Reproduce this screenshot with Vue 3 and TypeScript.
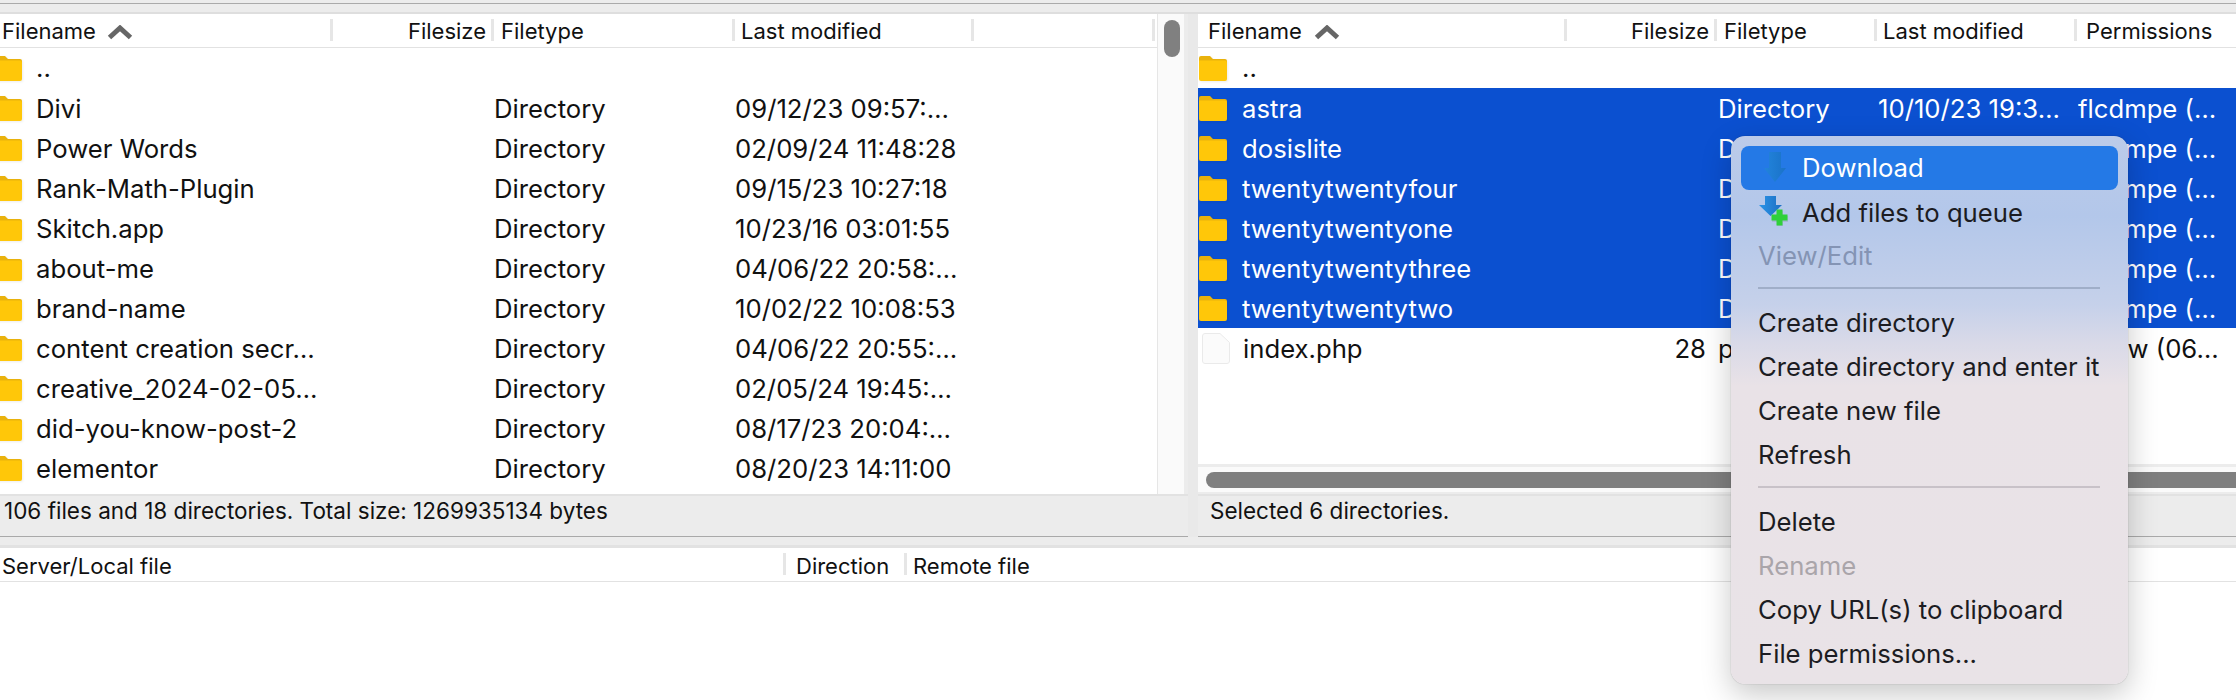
<script setup lang="ts">
interface Row { name: string; size?: string; type?: string; date?: string; perm?: string; file?: boolean; sel?: boolean }

const leftRows: Row[] = [
  { name: '..' },
  { name: 'Divi', type: 'Directory', date: '09/12/23 09:57:…' },
  { name: 'Power Words', type: 'Directory', date: '02/09/24 11:48:28' },
  { name: 'Rank-Math-Plugin', type: 'Directory', date: '09/15/23 10:27:18' },
  { name: 'Skitch.app', type: 'Directory', date: '10/23/16 03:01:55' },
  { name: 'about-me', type: 'Directory', date: '04/06/22 20:58:…' },
  { name: 'brand-name', type: 'Directory', date: '10/02/22 10:08:53' },
  { name: 'content creation secr…', type: 'Directory', date: '04/06/22 20:55:…' },
  { name: 'creative_2024-02-05…', type: 'Directory', date: '02/05/24 19:45:…' },
  { name: 'did-you-know-post-2', type: 'Directory', date: '08/17/23 20:04:…' },
  { name: 'elementor', type: 'Directory', date: '08/20/23 14:11:00' },
]

const rightRows: Row[] = [
  { name: '..' },
  { name: 'astra', type: 'Directory', date: '10/10/23 19:3…', perm: 'flcdmpe (…', sel: true },
  { name: 'dosislite', type: 'Directory', perm: 'flcdmpe (…', sel: true },
  { name: 'twentytwentyfour', type: 'Directory', perm: 'flcdmpe (…', sel: true },
  { name: 'twentytwentyone', type: 'Directory', perm: 'flcdmpe (…', sel: true },
  { name: 'twentytwentythree', type: 'Directory', perm: 'flcdmpe (…', sel: true },
  { name: 'twentytwentytwo', type: 'Directory', perm: 'flcdmpe (…', sel: true },
  { name: 'index.php', size: '28', type: 'php-file', perm: 'adfrw (06…', file: true },
]

const menuTop = ['Create directory', 'Create directory and enter it', 'Create new file', 'Refresh']
</script>

<template>
  <div class="app">
    <div class="topband"></div>

    <div class="panes">
      <section class="pane left">
        <div class="pane-main">
          <div class="listing">
            <div class="head lcols">
              <div class="hc name">Filename<svg class="chev" width="26" height="15" viewBox="0 0 26 15"><path d="M2.500 12.500 13 3l10.500 9.500" fill="none" stroke="#666" stroke-width="5"/></svg></div>
              <div class="hc size">Filesize</div>
              <div class="hc type">Filetype</div>
              <div class="hc date">Last modified</div>
              <div class="hc blank"></div>
            </div>
            <div class="rows">
              <div v-for="r in leftRows" :key="r.name" class="row lcols">
                <div class="c name">
                  <svg class="folder" width="28" height="25" viewBox="0 0 28 25"><path d="M2 0h9l3 3h12a2 2 0 0 1 2 2v6H0V2a2 2 0 0 1 2-2z" fill="#e9b20c"/><path d="M0 4.500h26a2 2 0 0 1 2 2V23a2 2 0 0 1-2 2H2a2 2 0 0 1-2-2z" fill="#ffc709"/></svg>
                  <span class="label" :class="{ up: r.name === '..' }">{{ r.name }}</span>
                </div>
                <div class="c size"></div>
                <div class="c type">{{ r.type }}</div>
                <div class="c date">{{ r.date }}</div>
              </div>
            </div>
          </div>
          <div class="vtrack"><div class="vthumb"></div></div>
        </div>
        <div class="status">106 files and 18 directories. Total size: 1269935134 bytes</div>
      </section>

      <div class="gutter"></div>

      <section class="pane right">
        <div class="listing">
          <div class="head rcols">
            <div class="hc name">Filename<svg class="chev" width="26" height="15" viewBox="0 0 26 15"><path d="M2.500 12.500 13 3l10.500 9.500" fill="none" stroke="#666" stroke-width="5"/></svg></div>
            <div class="hc size">Filesize</div>
            <div class="hc type">Filetype</div>
            <div class="hc date">Last modified</div>
            <div class="hc perm">Permissions</div>
          </div>
          <div class="rows">
            <div v-for="r in rightRows" :key="r.name" class="row rcols" :class="{ sel: r.sel }">
              <div class="c name">
                <svg v-if="r.file" class="doc" width="28" height="31" viewBox="0 0 28 31"><path d="M3 .5h15l9.500 9V28a2.500 2.500 0 0 1-2.500 2.500H3A2.500 2.500 0 0 1 .5 28V3A2.500 2.500 0 0 1 3 .5z" fill="#fbfbfb" stroke="#eaeaea"/></svg>
                <svg v-else class="folder" width="28" height="25" viewBox="0 0 28 25"><path d="M2 0h9l3 3h12a2 2 0 0 1 2 2v6H0V2a2 2 0 0 1 2-2z" fill="#e9b20c"/><path d="M0 4.500h26a2 2 0 0 1 2 2V23a2 2 0 0 1-2 2H2a2 2 0 0 1-2-2z" fill="#ffc709"/></svg>
                <span class="label" :class="{ up: r.name === '..' }">{{ r.name }}</span>
              </div>
              <div class="c size">{{ r.size }}</div>
              <div class="c type">{{ r.type }}</div>
              <div class="c date">{{ r.date }}</div>
              <div class="c perm">{{ r.perm }}</div>
            </div>
          </div>
        </div>
        <div class="htrack"><div class="hthumb"></div></div>
        <div class="status">Selected 6 directories.</div>
      </section>
    </div>

    <div class="midband"></div>

    <section class="queue">
      <div class="qhead">
        <div class="hc qname">Server/Local file</div>
        <div class="hc qdir">Direction</div>
        <div class="hc qremote">Remote file</div>
      </div>
    </section>

    <div class="menu">
      <div class="mi active">
        <svg class="micon dl-icon" width="22" height="30" viewBox="0 0 22 30">
          <defs><linearGradient id="dlg" x1="0" x2="1" y1="0" y2="0"><stop offset="0" stop-color="#2284dc"/><stop offset="1" stop-color="#1a72c8"/></linearGradient></defs>
          <path d="M5 0h12v16h5L11 30 0 16h5z" fill="url(#dlg)"/>
        </svg>
        <span>Download</span>
      </div>
      <div class="mi queue-item">
        <svg class="micon queue-icon" width="30" height="30" viewBox="0 0 30 30">
          <defs><linearGradient id="qg" x1="0" x2="1" y1="0" y2="0"><stop offset="0" stop-color="#2c94e6"/><stop offset="1" stop-color="#1c6fc4"/></linearGradient></defs>
          <path d="M6 0h11v9h6L11.500 20 0 9h6z" fill="url(#qg)"/>
          <path d="M18 15h6v5h5v6h-5v5h-6v-5h-5v-6h5z" fill="#8a9aa8" opacity=".35"/>
          <path d="M18 14h6v5h5v6h-5v5h-6v-5h-5v-6h5z" transform="translate(-.5 -.5)" fill="#2fd03a"/>
        </svg>
        <span>Add files to queue</span>
      </div>
      <div class="mi off dim">View/Edit</div>
      <div class="msep blue"></div>
      <div v-for="m in menuTop" :key="m" class="mi">{{ m }}</div>
      <div class="msep"></div>
      <div class="mi">Delete</div>
      <div class="mi off">Rename</div>
      <div class="mi">Copy URL(s) to clipboard</div>
      <div class="mi">File permissions...</div>
    </div>
  </div>
</template>

<style scoped>
.app {
  position: relative;
  width: 2236px;
  height: 700px;
  overflow: hidden;
  background: #fff;
  color: #111;
  font-family: Inter, "Noto Sans", "Liberation Sans", sans-serif;
  display: flex;
  flex-direction: column;
}
.topband {
  height: 14px;
  flex: none;
  background: #ececec;
  box-sizing: border-box;
  border-bottom: 2px solid #dedede;
  box-shadow: inset 0 3px 0 #ececec, inset 0 4px 0 #aaa;
}
.panes { display: flex; height: 523px; flex: none; background: #ececec; }
.pane { display: flex; flex-direction: column; border-bottom: 1px solid #a9a9a9; box-sizing: border-box; }
.pane.left { width: 1188px; flex: none; }
.pane.right { flex: 1; min-width: 0; }
.gutter { width: 10px; flex: none; background: #e9e9e9; }
.pane-main { display: flex; height: 480px; flex: none; }
.listing { background: #fff; min-width: 0; overflow: hidden; flex: 1; display: flex; flex-direction: column; }
.vtrack { width: 27px; flex: none; background: #fafafa; border-left: 1px solid #e6e6e6; box-sizing: border-box; margin-right: 4px; padding: 6px 0 0 6px; }
.vthumb { width: 16px; height: 37px; border-radius: 8px; background: #808080; }
.head { display: grid; height: 34px; flex: none; box-sizing: border-box; border-bottom: 1px solid #e2e2e2; font-size: 22px; align-items: center; background: #fff; }
.hc { height: 22px; line-height: 25px; box-sizing: border-box; white-space: nowrap; border-right: 3px solid #e6e6e6; margin-top: -1px; }
.hc .chev { margin-left: 11px; vertical-align: -1px; }
.lcols { grid-template-columns: 333px 161px 241px 239px 181px; }
.rcols { grid-template-columns: 369px 150px 160px 200px 158px; }
.head .name { padding-left: 2px; }
.right .head .name { padding-left: 10px; }
.right .head .name .chev { margin-left: 12px; }
.head .size { text-align: right; padding-right: 5px; }
.head .type { padding-left: 7px; }
.head .date { padding-left: 6px; }
.head .perm { padding-left: 9px; border-right: 0; }
.rows { flex: 1; overflow: hidden; font-size: 25.7px; }
.right .listing { flex: none; height: 450px; }
.row { display: grid; height: 40px; align-items: center; white-space: nowrap; }
.row.sel { background: #0b50d0; color: #fff; }
.c { min-width: 0; overflow: hidden; line-height: 39px; }
.c.name { display: flex; align-items: center; overflow: visible; }
.left .folder { margin-left: -6px; margin-right: 14px; }
.right .folder { margin-left: 1px; margin-right: 15px; }
.folder { flex: none; margin-top: -1px; filter: drop-shadow(1px 1px 1px rgba(0,0,0,.07)); }
.doc { flex: none; margin: 0 13px 0 4px; }
.label { line-height: 41px; }
.label.up { position: relative; top: -1px; }
.c.size { text-align: right; padding-right: 11px; }
.right .c.type { padding-left: 1px; }
.right .c.date { padding-left: 1px; }
.right .c.perm { padding-left: 1px; }
.htrack { height: 30px; flex: none; background: #fafafa; border-top: 3px solid #ececec; border-bottom: 2px solid #ececec; box-sizing: border-box; padding: 5px 0 0 8px; }
.hthumb { height: 16px; border-radius: 8px 0 0 8px; background: #7f7f7f; }
.status { flex: 1; font-size: 22.5px; line-height: 26px; padding: 2px 0 0 4px; background: #ececec; border-top: 2px solid #e2e2e2; white-space: nowrap; box-sizing: border-box; }
.right .status { padding-left: 12px; }
.midband { height: 11px; flex: none; background: #ececec; box-sizing: border-box; border-bottom: 3px solid #e2e2e2; }
.queue { flex: 1; background: #fff; }
.qhead { display: flex; height: 34px; align-items: center; font-size: 22px; border-bottom: 1px solid #e2e2e2; box-sizing: border-box; }
.qhead .hc { line-height: 27px; }
.qname { width: 786px; padding-left: 2px; }
.qdir { width: 121px; padding-left: 10px; }
.qremote { padding-left: 6px; border-right: 0; }

.menu {
  position: absolute;
  left: 1731px;
  top: 136px;
  width: 397px;
  height: 548px;
  box-sizing: border-box;
  padding: 10px;
  border-radius: 14px;
  background: linear-gradient(180deg, #bccbe9 0, #b3c7ea 80px, #c6d1ea 170px, #d8d9e8 205px, #e9e2e7 250px, #e9e3e7 100%);
  box-shadow: 0 0 1px rgba(0,0,0,.45), 0 10px 30px rgba(0,0,0,.22);
  font-size: 25.7px;
  color: #1c1c22;
}
.mi { height: 44px; line-height: 46px; padding-left: 17px; white-space: nowrap; display: flex; align-items: center; position: relative; }
.mi.active { background: #2479e6; color: #fff; border-radius: 8px; padding-left: 61px; line-height: 48px; }
.mi.queue-item { padding-left: 61px; line-height: 47px; }
.micon { position: absolute; }
.dl-icon { left: 23px; top: 6px; }
.queue-icon { left: 18px; top: 6px; }
.mi.off { color: #aaa5aa; }
.mi.dim { color: #8494b4; }
.msep { height: 2px; margin: 9px 18px 12px 17px; background: rgba(150,145,155,.4); }
.msep.blue { background: #a0aec8; }
</style>

<style>
html, body { margin: 0; background: #fff; overflow: hidden; }
</style>
